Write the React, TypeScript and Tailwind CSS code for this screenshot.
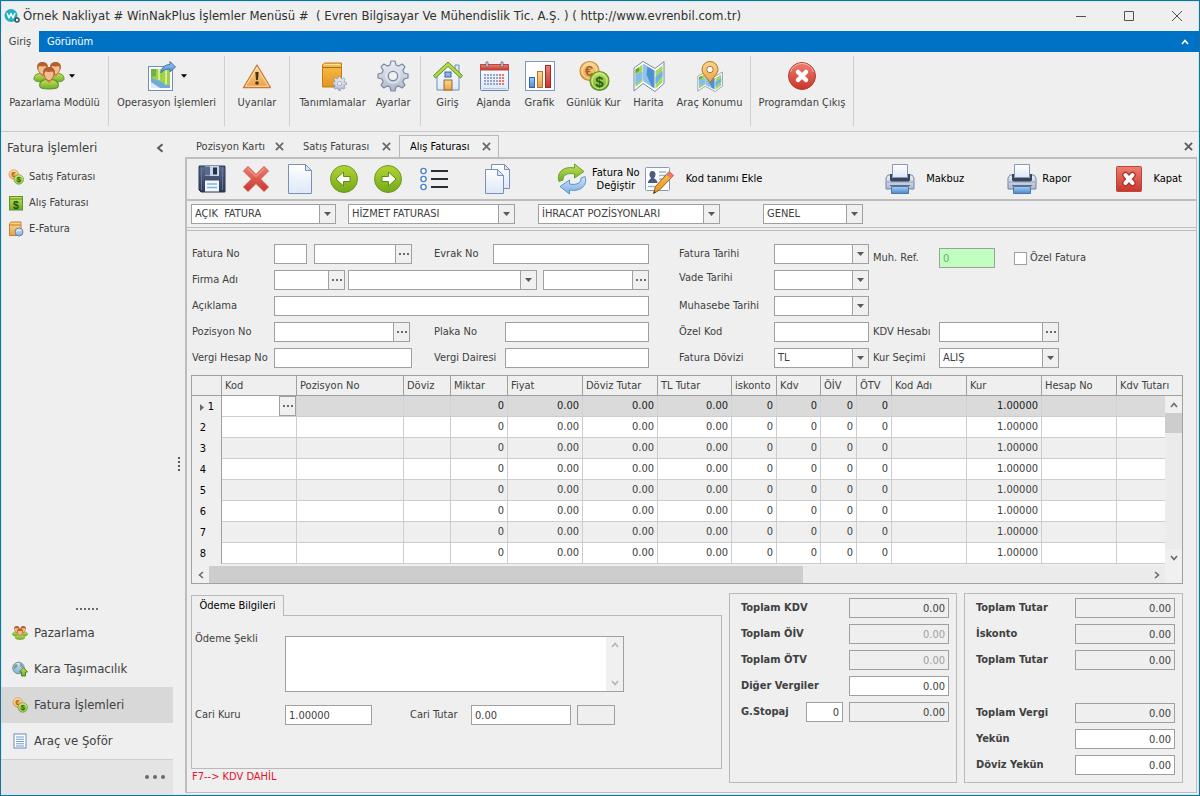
import type { ReactNode } from "react";

/* ---------- shared gradients ---------- */
function Gradients() {
  const g: [string, string, string][] = [
    ["gGreen", "#c5e35a", "#6fab28"],
    ["gArrow", "#b3d433", "#74a81a"],
    ["gOrange", "#fcd98c", "#eba04a"],
    ["gGold", "#f9c04e", "#e4951f"],
    ["gRed", "#ef7f72", "#c8352b"],
    ["gBlue", "#a3cdf2", "#4c8acd"],
    ["gSteel", "#eceff6", "#adb8cb"],
    ["gPaper", "#ffffff", "#dde8f8"],
    ["gNavy", "#5a6b8c", "#2d3954"],
    ["gGlobe", "#cfe6fa", "#7aaee0"],
  ];
  return (
    <svg className="absolute" width="0" height="0" aria-hidden="true">
      <defs>
        {g.map(([id, a, b]) => (
          <linearGradient key={id} id={id} x1="0" y1="0" x2="0" y2="1">
            <stop offset="0" stopColor={a} />
            <stop offset="1" stopColor={b} />
          </linearGradient>
        ))}
      </defs>
    </svg>
  );
}

/* ---------- icons ---------- */
type IconProps = { className?: string };
function Svg({ className = "size-8", children }: { className?: string; children: ReactNode }) {
  return (
    <svg viewBox="0 0 32 32" className={`${className} shrink-0`} fill="none" aria-hidden="true">
      {children}
    </svg>
  );
}

function Person({ x, y, s }: { x: number; y: number; s: number }) {
  return (
    <g transform={`translate(${x} ${y}) scale(${s})`}>
      <path d="M-1.500 17c0-4.500 3.500-5.500 6.500-5.500h4c3 0 6.500 1 6.500 5.500 0 2-4 3-8.500 3s-8.500-1-8.500-3z" fill="url(#gGreen)" stroke="#5c9428" />
      <path d="M5 9h4v4l-2 2.500L5 13z" fill="#d98e5c" />
      <path d="M2.500 3C3 .5 11 .5 11.500 3c.5 2.500 0 5-1 6.500C9.500 11.500 8 12.500 7 12.500s-2.500-1-3.500-3c-1-1.500-1.500-4-1-6.500z" fill="#f3bd92" stroke="#b8622e" strokeWidth=".9" />
      <path d="M2 8C1 2 3 0 7 0s6 2 5 8c-.5-2-1-3.500-2-4-2 .6-4 .6-6 0-1 .5-1.500 2-2 4z" fill="#b3602e" />
    </g>
  );
}
const PeopleIcon = (p: IconProps) => (
  <Svg {...p}>
    <Person x={2.500} y={2} s={1} />
    <Person x={15.500} y={2} s={1} />
    <Person x={8.300} y={7} s={1.100} />
  </Svg>
);
const MapExportIcon = () => (
  <Svg>
    <rect x="3.500" y="6.500" width="24" height="24" fill="#fff" stroke="#6f8fb8" />
    <path d="M6 9h19v19H6z" fill="#9fd04a" />
    <path d="M13 9h2v11h-2zM20 9h2v16h-2z" fill="#d4ec9a" />
    <path d="M6 17c4 4 9 3 12 6 2 2 4 2 7 2v3H6z" fill="#6ea9e0" />
    <path d="M6 22l9 6H6z" fill="#dbeaf9" />
    <path d="M6 9h5v7l-5 1z" fill="#6fb04a" />
    <path d="M16 13c0-5 4-8.500 9-8.500V1.500L30.500 7 25 12V9c-4 0-7 1-9 4z" fill="url(#gBlue)" stroke="#3f72b4" strokeLinejoin="round" />
  </Svg>
);
const WarningIcon = () => (
  <Svg>
    <path d="M16 5L29.500 27.500h-27z" fill="url(#gOrange)" stroke="#c97a38" strokeWidth="1.300" strokeLinejoin="round" />
    <path d="M16 7.500L27.500 26.300h-23z" stroke="#fdebc4" strokeWidth=".8" />
    <path d="M14.300 12h3.400l-.7 8h-2z" fill="#4a3420" />
    <circle cx="16" cy="23" r="1.800" fill="#4a3420" />
  </Svg>
);
const gearPath =
  "M14 1h4l1 4 2.600 1.100L25.200 4 28 6.800l-2.100 3.600L27 13l4 1v4l-4 1-1.100 2.600 2.100 3.600-2.800 2.800-3.600-2.100L19 27l-1 4h-4l-1-4-2.600-1.100L6.800 28 4 25.200l2.100-3.600L5 19l-4-1v-4l4-1 1.100-2.600L4 6.800 6.800 4l3.600 2.100L13 5z";
const GearShape = () => (
  <>
    <path d={gearPath} fill="url(#gSteel)" stroke="#7c889f" strokeWidth="1.200" strokeLinejoin="round" />
    <circle cx="16" cy="16" r="7" stroke="#dfe4ee" strokeWidth="1.500" />
    <circle cx="16" cy="16" r="4.600" fill="#f0f0f0" stroke="#7c889f" strokeWidth="1.200" />
  </>
);
const GearIcon = () => (
  <Svg>
    <GearShape />
  </Svg>
);
const BookGearIcon = () => (
  <Svg>
    <path d="M5.500 5l2-2h17v22l-2 2h-17z" fill="url(#gGold)" stroke="#bf7d20" />
    <path d="M6 7.500h18" stroke="#b06a10" />
    <path d="M7 4.500h16" stroke="#fde3a8" />
    <g transform="translate(15 16) scale(.47)">
      <GearShape />
    </g>
  </Svg>
);
const HouseIcon = () => (
  <Svg>
    <path d="M23 5h4v9h-4z" fill="#dfe8f4" stroke="#6f8fb8" />
    <path d="M5 14L16 4l11 10v16H5z" fill="url(#gPaper)" stroke="#6f8fb8" />
    <path d="M1.500 15.500L16 2l14.500 13.500L28.500 18 16 6.500 3.500 18z" fill="#b4d84a" stroke="#5c8f1c" strokeLinejoin="round" />
    <rect x="13" y="12" width="6" height="5" fill="#8db4e2" stroke="#3a62a0" />
    <rect x="12" y="20" width="8" height="10" fill="url(#gOrange)" stroke="#a0662a" />
  </Svg>
);
const CalendarIcon = () => (
  <Svg>
    <rect x="2.500" y="4.500" width="28" height="26" rx="1" fill="url(#gPaper)" stroke="#6a84b4" />
    <path d="M2.500 4.500h28V10h-28z" fill="url(#gRed)" stroke="#b8483e" />
    <path d="M8 2h2v5H8zM23 2h2v5h-2z" fill="#e4e8f0" stroke="#5c6478" strokeWidth=".8" />
    {[14, 17, 20, 23].map((y) =>
      [6, 9, 12, 15, 18, 21, 24].map((x) => (
        <rect key={`${x}-${y}`} x={x} y={y} width="2" height="2" fill={x > 20 ? "#e2786c" : "#94a6cc"} />
      )),
    )}
    <path d="M5 28.500h23" stroke="#b8c6e0" />
  </Svg>
);
const ChartIcon = () => (
  <Svg>
    <rect x="1.500" y="1.500" width="29" height="29" fill="#fff" stroke="#7a96c2" />
    <rect x="5.500" y="17.500" width="5" height="10" fill="url(#gBlue)" stroke="#2d68ac" />
    <rect x="13.500" y="11.500" width="5" height="16" fill="url(#gOrange)" stroke="#b8702c" />
    <rect x="21.500" y="5.500" width="5" height="22" fill="url(#gRed)" stroke="#9c2c24" />
  </Svg>
);
const CoinsIcon = (p: IconProps) => (
  <Svg {...p}>
    <circle cx="11.500" cy="11" r="9.500" fill="url(#gOrange)" stroke="#d08a3c" strokeWidth="1.200" />
    <circle cx="11.500" cy="11" r="7.300" stroke="#fbe2b0" />
    <text x="11" y="16" textAnchor="middle" fontSize="15" fontWeight="700" fontFamily="Liberation Sans, sans-serif" fill="#a8642c">€</text>
    <circle cx="21.500" cy="21" r="9.500" fill="url(#gGreen)" stroke="#5c9428" strokeWidth="1.200" />
    <circle cx="21.500" cy="21" r="7.500" stroke="#d8efa0" />
    <text x="21.500" y="26.500" textAnchor="middle" fontSize="15" fontWeight="700" fontFamily="Liberation Sans, sans-serif" fill="#2a6418">$</text>
  </Svg>
);
const MapShape = () => (
  <>
    <path d="M1 8l9-6.500 12 7 9-7v22l-9 8-12-8-9 7.500z" fill="#fff" stroke="#7688a4" strokeLinejoin="round" />
    <path d="M2.500 9.500l7-5v17l-7 5.500z" fill="#a8d65a" />
    <path d="M10.500 4l11 6.500v18l-11-7.500z" fill="#4f90d2" />
    <path d="M22.500 11l7-5.500v17l-7 6z" fill="#a4d668" />
    <path d="M2.500 14l7-2v7l-7 6z" fill="#84bdec" />
    <path d="M10.500 4l4 2.500-1 8 5 12-8-5.500z" fill="#8cc4ee" />
    <path d="M22.500 17l7-6v5l-7 8z" fill="#6fb0e6" />
    <path d="M2.500 9.500l3-2 1 3-4 3z" fill="#5fa038" />
  </>
);
const MapIcon = () => (
  <Svg>
    <MapShape />
  </Svg>
);
const MapPinIcon = () => (
  <Svg>
    <g transform="translate(3 11) scale(.82 .65)">
      <MapShape />
    </g>
    <path d="M16 23C13 17 8 14 8 9.500a8 8 0 0 1 16 0C24 14 19 17 16 23z" fill="url(#gOrange)" stroke="#b07428" />
    <circle cx="16" cy="9.500" r="3.200" fill="#fff" stroke="#b07428" />
  </Svg>
);
const ExitIcon = () => (
  <Svg>
    <circle cx="16" cy="16" r="13.500" fill="url(#gRed)" stroke="#b43a30" />
    <path d="M12 12l8 8M20 12l-8 8" stroke="#fff" strokeWidth="4.500" strokeLinecap="round" />
    <path d="M4.500 12a12 12 0 0 1 23 0" stroke="#f8b4ac" />
  </Svg>
);
const SaveIcon = () => (
  <Svg>
    <path d="M3 3h26v26H5l-2-2z" fill="url(#gNavy)" stroke="#2b3650" />
    <rect x="9" y="3" width="14" height="10" fill="#c9d4e6" />
    <rect x="17" y="4.500" width="4" height="7" fill="#27324c" />
    <path d="M9 3.500h5v9H9z" fill="#5a6b8c" />
    <rect x="9" y="17.500" width="14" height="11" fill="#f4f8fd" />
    <path d="M11 21h10M11 24.500h10" stroke="#7fb4de" strokeWidth="1.500" />
    <path d="M5.500 5v22M26.500 5v22" stroke="#65779a" />
  </Svg>
);
const DeleteIcon = () => (
  <Svg>
    <path d="M8 3.500l8 8 8-8 4.500 4.500-8 8 8 8-4.500 4.500-8-8-8 8L3.500 24l8-8-8-8z" fill="url(#gRed)" stroke="#cf5b50" strokeLinejoin="round" />
    <path d="M8 5.500l8 8 8-8" stroke="#f9b0a6" />
  </Svg>
);
const PageIcon = () => (
  <Svg>
    <path d="M4.500 1.500h17l6 6v23h-23z" fill="url(#gPaper)" stroke="#7c90b2" />
    <path d="M21.500 1.500v6h6z" fill="#dbe5f4" stroke="#7c90b2" />
  </Svg>
);
const PagesIcon = () => (
  <Svg>
    <path d="M9.500 1.500h13l5 5v19h-18z" fill="url(#gPaper)" stroke="#7c90b2" />
    <path d="M22.500 1.500v5h5z" fill="#dbe5f4" stroke="#7c90b2" />
    <path d="M3.500 6.500h12l6 6v18h-18z" fill="url(#gPaper)" stroke="#7c90b2" />
    <path d="M15.500 6.500v6h6z" fill="#dbe5f4" stroke="#7c90b2" />
  </Svg>
);
const RoundArrowIcon = ({ flip }: { flip?: boolean }) => (
  <Svg>
    <g transform={flip ? "matrix(-1 0 0 1 32 0)" : undefined}>
      <circle cx="16" cy="16" r="13.500" fill="url(#gArrow)" stroke="#6a9a22" />
      <path d="M8 16l7.500-7v4.500h6.500v5h-6.500V23z" fill="#fff" stroke="#5c8c16" strokeLinejoin="round" />
    </g>
  </Svg>
);
const ListIcon = () => (
  <Svg>
    {[7, 15, 23].map((y) => (
      <g key={y}>
        <circle cx="4.500" cy={y + 1} r="2.600" fill="#fff" stroke="#4a86c8" strokeWidth="1.400" />
        <rect x="12" y={y} width="17" height="2" fill="#2b2f38" />
      </g>
    ))}
  </Svg>
);
const RefreshIcon = () => (
  <Svg>
    <path d="M3 18.500C0 9 8 3 18.500 5V1L28 8.500 18.500 15v-4C12 9.500 6.500 12 7 17z" fill="url(#gGreen)" stroke="#6a9f2c" strokeLinejoin="round" />
    <path d="M29 13.500C32 23 24 29 13.500 27v4L4 23.500 13.500 17v4c6.500 1.500 12-1 11.500-6z" fill="url(#gGlobe)" stroke="#5f92c8" strokeLinejoin="round" />
  </Svg>
);
const CardEditIcon = () => (
  <Svg>
    <rect x="1.500" y="4.500" width="24" height="23" rx="1" fill="#fff" stroke="#8a9ab4" />
    <path d="M8.500 8c2.200 0 3 1.500 3 3.500 0 1.500-.7 3-1.500 3.500 0 1 3.500 1.500 3.500 5H4c0-3.500 3.200-4 3.200-5-1-.5-1.700-2-1.700-3.500 0-2 .8-3.500 3-3.500z" fill="#4c5c7c" />
    <path d="M15 9h7M15 12.500h7M15 16h5M4 23.500h9" stroke="#9db4d6" strokeWidth="1.500" />
    <path d="M25 8.500l4.500 4L15.500 27l-6 3.500 2-7z" fill="url(#gGold)" stroke="#9a5e24" strokeLinejoin="round" />
    <path d="M25 8.500l4.500 4-3 3-4.500-4z" fill="#e4806c" />
    <path d="M10.300 28l-.8 2.500 2.300-1.200z" fill="#402818" />
  </Svg>
);
const PrinterIcon = () => (
  <Svg>
    <path d="M4 12h24l2 3v11H2V15z" fill="url(#gSteel)" stroke="#7486aa" strokeLinejoin="round" />
    <path d="M2.500 19h27" stroke="#8fa0c0" />
    <path d="M8.500 1.500h15v13h-15z" fill="url(#gPaper)" stroke="#8898b4" />
    <path d="M6 11v5.500c0 1.500 1 2 2.500 2h15c1.500 0 2.500-.5 2.500-2V11h-2v4H8v-4z" fill="#39435c" />
    <path d="M7.500 23.500h17v7h-17z" fill="url(#gBlue)" stroke="#5076a8" />
    <path d="M6 22.500h20" stroke="#5c6c8c" />
  </Svg>
);
const CloseBoxIcon = () => (
  <Svg>
    <rect x="3.500" y="3.500" width="25" height="25" rx="1" fill="url(#gRed)" stroke="#b8483e" />
    <path d="M12.500 12l7 8M19.500 12l-7 8" stroke="#a8382c" strokeWidth="6.500" strokeLinecap="round" />
    <path d="M12.500 12l7 8M19.500 12l-7 8" stroke="#fff" strokeWidth="4" strokeLinecap="round" />
  </Svg>
);
const DollarBookIcon = ({ className }: IconProps) => (
  <Svg className={className}>
    <rect x="3" y="3" width="26" height="27" fill="url(#gGreen)" stroke="#5c9428" strokeWidth="2" />
    <path d="M3 8h26" stroke="#5c9428" strokeWidth="2" />
    <text x="16" y="27" textAnchor="middle" fontSize="21" fontWeight="700" fontFamily="Liberation Sans, sans-serif" fill="#1f4f10">$</text>
  </Svg>
);
const GlobeBookIcon = ({ className }: IconProps) => (
  <Svg className={className}>
    <path d="M3 5l3-3h20v24l-3 3H3z" fill="url(#gOrange)" stroke="#c47f2c" strokeWidth="2" />
    <path d="M4 8h21" stroke="#c47f2c" strokeWidth="2" />
    <circle cx="22" cy="22" r="8" fill="url(#gGlobe)" stroke="#6f87a4" strokeWidth="2" />
    <path d="M17 21c3-4 5-1 8-3" stroke="#fff" strokeWidth="2" />
  </Svg>
);
const GlobeUpIcon = ({ className }: IconProps) => (
  <Svg className={className}>
    <circle cx="13" cy="14" r="11.500" fill="url(#gGlobe)" stroke="#6f87a4" strokeWidth="2" />
    <path d="M6 7c4-2 6 1 5 4s-4 2-6 6c-2-4-1-8 1-10zM16 4c4 2 6 5 6 9-3 1-5-1-6-4z" fill="#7aa47c" />
    <path d="M23 13l8 9h-4v8h-8v-8h-4z" fill="url(#gGreen)" stroke="#4c8420" strokeWidth="2" strokeLinejoin="round" />
  </Svg>
);
const DocListIcon = ({ className }: IconProps) => (
  <Svg className={className}>
    <rect x="4" y="2" width="24" height="28" fill="#fff" stroke="#6c8abc" strokeWidth="2" />
    <path d="M8 8h16M8 12.500h16M8 17h16M8 21.500h16M8 26h16" stroke="#6f9bd0" strokeWidth="2.400" />
  </Svg>
);
const LogoIcon = () => (
  <Svg className="size-4">
    <circle cx="14" cy="15" r="13" fill="#1fb0c4" />
    <path d="M6 10l4 10 4-9 4 9 4-10" stroke="#fff" strokeWidth="3" strokeLinejoin="round" />
    <circle cx="26" cy="24" r="4" fill="#efefef" stroke="#3a4c5c" strokeWidth="3" />
  </Svg>
);
const Chevron = ({ d, className = "size-2" }: { d: string; className?: string }) => (
  <svg viewBox="0 0 8 8" className={`${className} shrink-0`} fill="none" stroke="currentColor" strokeWidth="1.600" aria-hidden="true">
    <path d={d} />
  </svg>
);
const LEFT = "M6 1L2.500 4 6 7";
const RIGHT = "M2 1l3.500 3L2 7";
const UP = "M1 6l3-3.500L7 6";
const DOWN = "M1 2l3 3.500L7 2";
const CROSS = "M.8.8l6.400 6.400M7.200.8L.8 7.200";
const Caret = ({ className = "w-[7px]" }: IconProps) => (
  <svg viewBox="0 0 7 4" className={`h-1 shrink-0 ${className}`} fill="currentColor" aria-hidden="true">
    <path d="M0 0h7L3.500 4z" />
  </svg>
);

/* ---------- form controls ---------- */
const box = "h-5 border border-[#a0a0a0] bg-white";

function Text({ id, label, value, w }: { id?: string; label?: string; value?: string; w: string }) {
  return <input id={id} aria-label={label} defaultValue={value} className={`${box} min-w-0 px-[3px] ${w}`} />;
}
function Dots() {
  return (
    <span className="flex gap-[2px]">
      <i className="size-[2px] bg-[#6a6a6a]" />
      <i className="size-[2px] bg-[#6a6a6a]" />
      <i className="size-[2px] bg-[#6a6a6a]" />
    </span>
  );
}
function Lookup({ id, label, w }: { id?: string; label?: string; w: string }) {
  return (
    <div className={`${box} flex ${w}`}>
      <input id={id} aria-label={label} className="min-w-0 flex-1 px-[3px]" />
      <button type="button" aria-label="Seç" className="flex w-4 items-center justify-center border-l border-[#a0a0a0] bg-[#f0f0f0]">
        <Dots />
      </button>
    </div>
  );
}
function Combo({ id, label, value = "", w }: { id?: string; label?: string; value?: string; w: string }) {
  return (
    <div className={`${box} relative ${w}`}>
      <select id={id} aria-label={label} defaultValue={value} className="h-full w-full appearance-none pr-4 pl-[3px]">
        <option value={value}>{value}</option>
      </select>
      <span className="pointer-events-none absolute inset-y-0 right-0 flex w-4 items-center justify-center border-l border-[#a0a0a0] bg-[#f0f0f0] text-[#5a5a5a]">
        <Caret />
      </span>
    </div>
  );
}
function Label({ htmlFor, w = "", children }: { htmlFor: string; w?: string; children: ReactNode }) {
  return (
    <label htmlFor={htmlFor} className={`shrink-0 whitespace-nowrap ${w}`}>
      {children}
    </label>
  );
}

/* ---------- ribbon ---------- */
function RibbonItem({ icon, label, w = "", menu }: { icon: ReactNode; label: string; w?: string; menu?: boolean }) {
  return (
    <button className={`flex flex-col items-center gap-[3px] whitespace-nowrap ${w}`}>
      <span className="flex items-center gap-1">
        {icon}
        {menu && <Caret className="w-[6px] text-black" />}
      </span>
      <span>{label}</span>
    </button>
  );
}
function RibbonGroup({ w, children }: { w: string; children: ReactNode }) {
  return <div className={`flex h-[70px] items-start justify-center border-r border-[#cfcfcf] pt-1 ${w}`}>{children}</div>;
}

/* ---------- tabs ---------- */
function DocTab({ label, active }: { label: string; active?: boolean }) {
  return (
    <div
      className={`flex items-center justify-between border-x border-t pr-[7px] pl-[10px] ${
        active ? "w-[100px] border-[#b9b9b9] bg-[#f0f0f0] text-black" : "w-[107px] border-transparent"
      }`}
    >
      <button>{label}</button>
      <button aria-label={`${label} kapat`} className="text-[#6a6a6a]">
        <Chevron d={CROSS} className="size-[9px]" />
      </button>
    </div>
  );
}

/* ---------- grid ---------- */
const columns: { name: string; w: string; value?: string }[] = [
  { name: "Kod", w: "w-[75px]" },
  { name: "Pozisyon No", w: "w-[107px]" },
  { name: "Döviz", w: "w-[47px]" },
  { name: "Miktar", w: "w-[57px]", value: "0" },
  { name: "Fiyat", w: "w-[75px]", value: "0.00" },
  { name: "Döviz Tutar", w: "w-[75px]", value: "0.00" },
  { name: "TL Tutar", w: "w-[74px]", value: "0.00" },
  { name: "iskonto", w: "w-[45px]", value: "0" },
  { name: "Kdv", w: "w-[44px]", value: "0" },
  { name: "ÖİV", w: "w-[36px]", value: "0" },
  { name: "ÖTV", w: "w-[35px]", value: "0" },
  { name: "Kod Adı", w: "w-[75px]" },
  { name: "Kur", w: "w-[75px]", value: "1.00000" },
  { name: "Hesap No", w: "w-[75px]" },
  { name: "Kdv Tutarı", w: "" },
];

function InvoiceGrid() {
  return (
    <div className="border border-[#a0a0a0]">
      <div className="relative h-[190px] overflow-hidden">
        <table className="w-full table-fixed border-separate border-spacing-0">
          <colgroup>
            <col className="w-[30px]" />
            {columns.map((c) => (
              <col key={c.name} className={c.w} />
            ))}
          </colgroup>
          <thead>
            <tr className="h-5">
              <th className="border-r border-b border-[#a0a0a0] p-0" aria-label="Satır" />
              {columns.map((c) => (
                <th
                  key={c.name}
                  className="border-r border-b border-[#a0a0a0] p-0 pl-[3px] text-left font-normal whitespace-nowrap last:border-r-0"
                >
                  {c.name}
                </th>
              ))}
            </tr>
          </thead>
          <tbody>
            {[1, 2, 3, 4, 5, 6, 7, 8].map((n) => (
              <tr key={n} className={`h-[21px] ${n === 1 ? "bg-[#dadada] text-[#202020]" : n % 2 ? "bg-[#efefef]" : "bg-white"}`}>
                <th className="border-r border-[#a0a0a0] bg-[#efefef] p-0 font-normal text-black">
                  <span className="flex items-center justify-end gap-1 pt-px pr-[7px]">
                    {n === 1 && (
                      <svg viewBox="0 0 4 7" className="h-[7px] w-1" fill="#6a6a6a" aria-hidden="true">
                        <path d="M0 0l4 3.500L0 7z" />
                      </svg>
                    )}
                    <span className={n === 1 ? "" : "pr-2"}>{n}</span>
                  </span>
                </th>
                {columns.map((c, i) => (
                  <td
                    key={c.name}
                    className={`border-r border-b p-0 text-right last:border-r-0 ${n === 1 ? "border-r-[#d2d2d2] border-b-[#cdcdcd]" : "border-[#cdcdcd]"}`}
                  >
                    {n === 1 && i === 0 ? (
                      <span className="flex h-5 bg-white">
                        <input aria-label="Kod" className="min-w-0 flex-1 px-[3px]" />
                        <button aria-label="Kod seç" className="flex w-[17px] items-center justify-center border border-[#a0a0a0] bg-[#f0f0f0]">
                          <Dots />
                        </button>
                      </span>
                    ) : (
                      <span className="block pr-[3px]">{c.value}</span>
                    )}
                  </td>
                ))}
              </tr>
            ))}
          </tbody>
        </table>
        <div className="absolute top-5 right-0 bottom-0 flex w-[17px] flex-col items-center bg-[#ebebeb] text-[#6a6a6a]">
          <button aria-label="Yukarı" className="flex h-[17px] w-full items-center justify-center bg-[#f0f0f0]">
            <Chevron d={UP} />
          </button>
          <div className="h-5 w-full bg-[#cdcdcd]" />
          <button aria-label="Aşağı" className="mt-auto flex h-[17px] w-full items-center justify-center bg-[#f0f0f0]">
            <Chevron d={DOWN} />
          </button>
        </div>
      </div>
      <div className="flex h-[17px] bg-[#ebebeb] text-[#6a6a6a]">
        <button aria-label="Sola" className="flex w-[17px] items-center justify-center bg-[#f0f0f0]">
          <Chevron d={LEFT} />
        </button>
        <div className="w-3/5 bg-[#cdcdcd]" />
        <button aria-label="Sağa" className="ml-auto flex w-[17px] items-center justify-center">
          <Chevron d={RIGHT} />
        </button>
        <div className="w-[17px] bg-[#f0f0f0]" />
      </div>
    </div>
  );
}

/* ---------- totals ---------- */
function Total({ id, label, tone = "calc", extra, className = "" }: { id: string; label: string; tone?: "calc" | "off" | "edit"; extra?: ReactNode; className?: string }) {
  const tones = { calc: "bg-[#efefef]", off: "bg-[#efefef] text-[#a0a0a0]", edit: "bg-white" };
  return (
    <div className={`flex items-center ${className}`}>
      <label htmlFor={id} className="flex-1 font-bold whitespace-nowrap">
        {label}
      </label>
      {extra}
      <input id={id} defaultValue="0.00" disabled={tone === "off"} className={`h-5 w-[100px] border border-[#a0a0a0] px-[3px] text-right ${tones[tone]}`} />
    </div>
  );
}

/* ---------- sidebar ---------- */
function SideLink({ icon, label }: { icon: ReactNode; label: string }) {
  return (
    <a href="#" className="flex h-[26px] items-center gap-[5px] pl-[7px]">
      {icon}
      {label}
    </a>
  );
}
function SideModule({ icon, label, active }: { icon: ReactNode; label: string; active?: boolean }) {
  return (
    <button className={`flex h-9 w-full items-center gap-[6px] pl-[11px] text-[13px] ${active ? "bg-[#d8d8d8]" : ""}`}>
      {icon}
      {label}
    </button>
  );
}
function Sidebar() {
  return (
    <aside className="flex w-[172px] shrink-0 flex-col pb-px">
      <div className="flex h-8 items-center justify-between pr-2 pl-[6px] text-[13px]">
        <h2>Fatura İşlemleri</h2>
        <button aria-label="Daralt" className="text-[#5a5a5a]">
          <Chevron d={LEFT} className="size-[10px]" />
        </button>
      </div>
      <nav>
        <SideLink icon={<CoinsIcon className="size-4" />} label="Satış Faturası" />
        <SideLink icon={<DollarBookIcon className="size-4" />} label="Alış Faturası" />
        <SideLink icon={<GlobeBookIcon className="size-4" />} label="E-Fatura" />
      </nav>
      <div className="mt-auto flex h-[7px] justify-center gap-[2px]">
        {[1, 2, 3, 4, 5, 6].map((n) => (
          <i key={n} className="size-[2px] bg-[#6a6a6a]" />
        ))}
      </div>
      <nav>
        <SideModule icon={<PeopleIcon className="size-4" />} label="Pazarlama" />
        <SideModule icon={<GlobeUpIcon className="size-4" />} label="Kara Taşımacılık" />
        <SideModule active icon={<CoinsIcon className="size-4" />} label="Fatura İşlemleri" />
        <SideModule icon={<DocListIcon className="size-4" />} label="Araç ve Şoför" />
      </nav>
      <button aria-label="Diğer modüller" className="flex h-[35px] w-full items-center justify-end gap-1 border-t border-[#cfcfcf] bg-[#e4e4e4] pr-2">
        <i className="size-1 rounded-full bg-[#6a6a6a]" />
        <i className="size-1 rounded-full bg-[#6a6a6a]" />
        <i className="size-1 rounded-full bg-[#6a6a6a]" />
      </button>
    </aside>
  );
}

/* ---------- invoice toolbar ---------- */
function Tool({ icon, name, w = "w-11" }: { icon: ReactNode; name: string; w?: string }) {
  return (
    <button aria-label={name} className={`flex shrink-0 items-center justify-center ${w}`}>
      {icon}
    </button>
  );
}
function Toolbar() {
  return (
    <div className="flex h-[42px] items-center border-b-2 border-[#bdbdbd] pr-[14px] pl-[3px] whitespace-nowrap text-black">
      <Tool name="Kaydet" icon={<SaveIcon />} />
      <Tool name="Sil" icon={<DeleteIcon />} />
      <Tool name="Yeni" icon={<PageIcon />} />
      <Tool name="Önceki" icon={<RoundArrowIcon />} />
      <Tool name="Sonraki" icon={<RoundArrowIcon flip />} />
      <Tool name="Liste" icon={<ListIcon />} w="w-[50px]" />
      <Tool name="Kopyala" icon={<PagesIcon />} w="ml-3 w-[52px]" />
      <button className="ml-8 flex items-center gap-1 leading-[13px]">
        <RefreshIcon />
        <span className="text-center">
          Fatura No
          <br />
          Değiştir
        </span>
      </button>
      <button className="ml-1 flex items-center gap-[10px]">
        <CardEditIcon />
        Kod tanımı Ekle
      </button>
      <button className="ml-auto flex items-center gap-[10px]">
        <PrinterIcon />
        Makbuz
      </button>
      <button className="ml-[42px] flex items-center gap-1">
        <PrinterIcon />
        Rapor
      </button>
      <button className="ml-[42px] flex items-center gap-2">
        <CloseBoxIcon />
        Kapat
      </button>
    </div>
  );
}

/* ---------- header form ---------- */
function HeaderForm() {
  return (
    <form className="flex pl-[5px]">
      <div className="flex w-[457px] shrink-0 flex-col gap-[6px]">
        <div className="flex items-center">
          <Label htmlFor="faturaSeri" w="w-[82px]">Fatura No</Label>
          <Text id="faturaSeri" w="w-[33px]" />
          <Lookup label="Fatura No" w="ml-[7px] w-[98px]" />
          <Label htmlFor="evrakNo" w="ml-[22px] w-[59px]">Evrak No</Label>
          <Text id="evrakNo" w="flex-1" />
        </div>
        <div className="flex items-center">
          <Label htmlFor="firmaKod" w="w-[82px]">Firma Adı</Label>
          <Lookup id="firmaKod" w="w-[71px] shrink-0" />
          <Combo label="Firma Adı" w="ml-[3px] w-[189px] shrink-0" />
          <Lookup label="Firma hesap" w="ml-[6px] min-w-0 flex-1" />
        </div>
        <div className="flex items-center">
          <Label htmlFor="aciklama" w="w-[82px]">Açıklama</Label>
          <Text id="aciklama" w="flex-1" />
        </div>
        <div className="flex items-center">
          <Label htmlFor="pozisyonNo" w="w-[82px]">Pozisyon No</Label>
          <Lookup id="pozisyonNo" w="w-[136px]" />
          <Label htmlFor="plakaNo" w="ml-6 w-[71px]">Plaka No</Label>
          <Text id="plakaNo" w="flex-1" />
        </div>
        <div className="flex items-center">
          <Label htmlFor="vergiHesap" w="w-[82px]">Vergi Hesap No</Label>
          <Text id="vergiHesap" w="w-[138px]" />
          <Label htmlFor="vergiDairesi" w="ml-[22px] w-[71px]">Vergi Dairesi</Label>
          <Text id="vergiDairesi" w="flex-1" />
        </div>
      </div>
      <div className="ml-[30px] flex w-[190px] shrink-0 flex-col gap-[6px]">
        <div className="flex items-center">
          <Label htmlFor="faturaTarihi" w="w-[95px]">Fatura Tarihi</Label>
          <Combo id="faturaTarihi" w="flex-1" />
        </div>
        <div className="flex items-center">
          <Label htmlFor="vadeTarihi" w="w-[95px] self-start">Vade Tarihi</Label>
          <Combo id="vadeTarihi" w="flex-1" />
        </div>
        <div className="flex items-center">
          <Label htmlFor="muhasebeTarihi" w="w-[95px]">Muhasebe Tarihi</Label>
          <Combo id="muhasebeTarihi" w="flex-1" />
        </div>
        <div className="flex items-center">
          <Label htmlFor="ozelKod" w="w-[95px]">Özel Kod</Label>
          <Text id="ozelKod" w="flex-1" />
        </div>
        <div className="flex items-center">
          <Label htmlFor="faturaDovizi" w="w-[95px]">Fatura Dövizi</Label>
          <Combo id="faturaDovizi" value="TL" w="flex-1" />
        </div>
      </div>
      <div className="ml-1 flex shrink-0 flex-col gap-[6px] pt-1">
        <div className="flex items-center">
          <Label htmlFor="muhRef" w="w-[66px]">Muh. Ref.</Label>
          <input id="muhRef" defaultValue="0" className="h-5 w-14 border border-[#a0a0a0] bg-[#c0ffc0] px-[3px] text-[#6fae6f]" />
          <label className="ml-[19px] flex items-center gap-[3px]">
            <input type="checkbox" className="size-[13px] appearance-none border border-[#a0a0a0] bg-white" />
            Özel Fatura
          </label>
        </div>
        <div className="mt-auto flex items-center">
          <Label htmlFor="kdvHesabi" w="w-[66px]">KDV Hesabı</Label>
          <Lookup id="kdvHesabi" w="w-[120px]" />
        </div>
        <div className="flex items-center">
          <Label htmlFor="kurSecimi" w="w-[66px]">Kur Seçimi</Label>
          <Combo id="kurSecimi" value="ALIŞ" w="w-[120px]" />
        </div>
      </div>
    </form>
  );
}

function Payment() {
  return (
    <section className="flex min-w-0 flex-1 flex-col pt-[2px]">
      <div className="flex">
        <button className="h-[21px] w-[93px] border-x border-t border-[#b9b9b9] text-black">Ödeme Bilgileri</button>
        <div className="flex-1 border-b border-[#b9b9b9]" />
      </div>
      <div className="h-[153px] border-x border-b border-[#b9b9b9] pt-[15px] pl-[3px]">
        <div className="flex items-start">
          <Label htmlFor="odemeSekli" w="w-[90px]">Ödeme Şekli</Label>
          <div className="mt-[5px] flex h-14 w-[339px] border border-[#a0a0a0] bg-white">
            <textarea id="odemeSekli" className="min-w-0 flex-1 resize-none overflow-hidden p-1" />
            <div className="flex w-[17px] flex-col items-center justify-between bg-[#f0f0f0] py-1 text-[#b4b4b4]">
              <Chevron d={UP} />
              <Chevron d={DOWN} />
            </div>
          </div>
        </div>
        <div className="mt-[13px] flex items-center">
          <Label htmlFor="cariKuru" w="w-[90px]">Cari Kuru</Label>
          <Text id="cariKuru" value="1.00000" w="w-[87px]" />
          <Label htmlFor="cariTutar" w="ml-[38px] w-[61px]">Cari Tutar</Label>
          <Text id="cariTutar" value="0.00" w="w-[100px]" />
          <input aria-label="Cari döviz" readOnly className="ml-[6px] h-5 w-[38px] border border-[#a0a0a0] bg-[#efefef] px-[3px]" />
        </div>
      </div>
      <p className="pl-px text-[#e0142c]">F7--&gt; KDV DAHİL</p>
    </section>
  );
}

export default function App() {
  return (
    <div className="flex min-h-screen flex-col border border-[#1c6f97] bg-[#efefef] font-['DejaVu_Sans_Condensed','DejaVu_Sans',sans-serif] text-[11px] leading-4 text-[#404040] shadow-[inset_0_0_0_1px_#c5eef5]">
      <Gradients />
      <header className="flex h-[30px] items-center pr-[17px] pl-[3px]">
        <LogoIcon />
        <h1 className="ml-[3px] text-[13px] whitespace-pre text-[#303030]">
          {"Örnek Nakliyat # WinNakPlus İşlemler Menüsü #  ( Evren Bilgisayar Ve Mühendislik Tic. A.Ş. ) ( http://www.evrenbil.com.tr)"}
        </h1>
        <div className="ml-auto flex items-center gap-[38px] text-[#505050]">
          <button aria-label="Simge durumuna küçült">
            <svg viewBox="0 0 10 10" className="size-[10px]" stroke="currentColor" aria-hidden="true"><path d="M0 5.500h10" /></svg>
          </button>
          <button aria-label="Ekranı kapla">
            <svg viewBox="0 0 10 10" className="size-[10px]" stroke="currentColor" fill="none" aria-hidden="true"><path d="M.5.5h9v9h-9z" /></svg>
          </button>
          <button aria-label="Kapat">
            <svg viewBox="0 0 10 10" className="size-[10px]" stroke="currentColor" aria-hidden="true"><path d="M0 0l10 10M10 0L0 10" /></svg>
          </button>
        </div>
      </header>
      <nav className="flex h-[21px] items-stretch bg-[#0072c6] text-white">
        <button className="w-[38px] bg-[#efefef] text-[#404040]">Giriş</button>
        <button className="px-2">Görünüm</button>
        <button aria-label="Şeridi daralt" className="mr-[10px] ml-auto"><Chevron d={UP} /></button>
      </nav>
      <div className="flex h-[80px] border-b border-[#c8c8c8] pt-1">
        <RibbonGroup w="w-[108px]"><RibbonItem menu icon={<PeopleIcon />} label="Pazarlama Modülü" /></RibbonGroup>
        <RibbonGroup w="w-[116px]"><RibbonItem menu icon={<MapExportIcon />} label="Operasyon İşlemleri" /></RibbonGroup>
        <RibbonGroup w="w-[65px]"><RibbonItem icon={<WarningIcon />} label="Uyarılar" /></RibbonGroup>
        <RibbonGroup w="w-[131px] gap-[10px]">
          <RibbonItem icon={<BookGearIcon />} label="Tanımlamalar" />
          <RibbonItem icon={<GearIcon />} label="Ayarlar" />
        </RibbonGroup>
        <RibbonGroup w="w-[330px]">
          <RibbonItem w="w-[46px]" icon={<HouseIcon />} label="Giriş" />
          <RibbonItem w="w-[46px]" icon={<CalendarIcon />} label="Ajanda" />
          <RibbonItem w="w-[46px]" icon={<ChartIcon />} label="Grafik" />
          <RibbonItem w="w-[62px]" icon={<CoinsIcon />} label="Günlük Kur" />
          <RibbonItem w="w-[48px]" icon={<MapIcon />} label="Harita" />
          <RibbonItem w="w-[74px]" icon={<MapPinIcon />} label="Araç Konumu" />
        </RibbonGroup>
        <RibbonGroup w="w-[103px]"><RibbonItem icon={<ExitIcon />} label="Programdan Çıkış" /></RibbonGroup>
      </div>
      <div className="flex flex-1">
        <Sidebar />
        <div className="flex w-3 flex-col items-center justify-center gap-[2px]">
          {[1, 2, 3, 4].map((n) => (
            <i key={n} className="size-[2px] bg-[#5a5a5a]" />
          ))}
        </div>
        <main className="flex min-w-0 flex-1 flex-col pr-[2px] pb-[2px]">
          <div className="flex h-[25px] pt-[3px]">
            <DocTab label="Pozisyon Kartı" />
            <DocTab label="Satış Faturası" />
            <DocTab label="Alış Faturası" active />
            <button aria-label="Sekmeyi kapat" className="mr-1 ml-auto text-[#5a5a5a]"><Chevron d={CROSS} className="size-[9px]" /></button>
          </div>
          <div className="flex-1 border-2 border-r border-b border-[#bdbdbd]">
            <Toolbar />
            <div className="flex h-[27px] items-center border-b border-[#bdbdbd] pl-1">
              <Combo label="Fatura durumu" value={"AÇIK\u00a0\u00a0FATURA"} w="w-[145px]" />
              <Combo label="Fatura türü" value="HİZMET FATURASI" w="ml-3 w-[167px]" />
              <Combo label="Pozisyon türü" value="İHRACAT POZİSYONLARI" w="ml-[23px] w-[182px]" />
              <Combo label="Grup" value="GENEL" w="ml-[43px] w-[100px]" />
            </div>
            <div className="mt-[2px] border-t border-[#bdbdbd] pt-[13px]">
              <HeaderForm />
              <div className="mt-[7px] mr-[13px] ml-1">
                <InvoiceGrid />
                <div className="mt-[9px] flex gap-[7px]">
                  <Payment />
                  <section className="flex h-[190px] w-[228px] shrink-0 flex-col gap-[6px] border border-[#b9b9b9] pt-1 pr-[7px] pl-[11px]">
                    <Total id="toplamKdv" label="Toplam KDV" />
                    <Total id="toplamOiv" label="Toplam ÖİV" tone="off" />
                    <Total id="toplamOtv" label="Toplam ÖTV" tone="off" />
                    <Total id="digerVergiler" label="Diğer Vergiler" tone="edit" />
                    <Total
                      id="stopaj"
                      label="G.Stopaj"
                      extra={<input aria-label="Stopaj oranı" defaultValue="0" className="mr-[6px] h-5 w-[37px] border border-[#a0a0a0] bg-white px-[3px] text-right" />}
                    />
                  </section>
                  <section className="flex h-[190px] w-[219px] shrink-0 flex-col gap-[6px] border border-[#b9b9b9] pt-1 pr-[7px] pl-[11px]">
                    <Total id="toplamTutar" label="Toplam Tutar" />
                    <Total id="iskonto" label="İskonto" />
                    <Total id="toplamTutarNet" label="Toplam Tutar" />
                    <Total id="toplamVergi" label="Toplam Vergi" className="mt-[27px]" />
                    <Total id="yekun" label="Yekün" tone="edit" />
                    <Total id="dovizYekun" label="Döviz Yekün" tone="edit" />
                  </section>
                </div>
              </div>
            </div>
          </div>
        </main>
      </div>
    </div>
  );
}
